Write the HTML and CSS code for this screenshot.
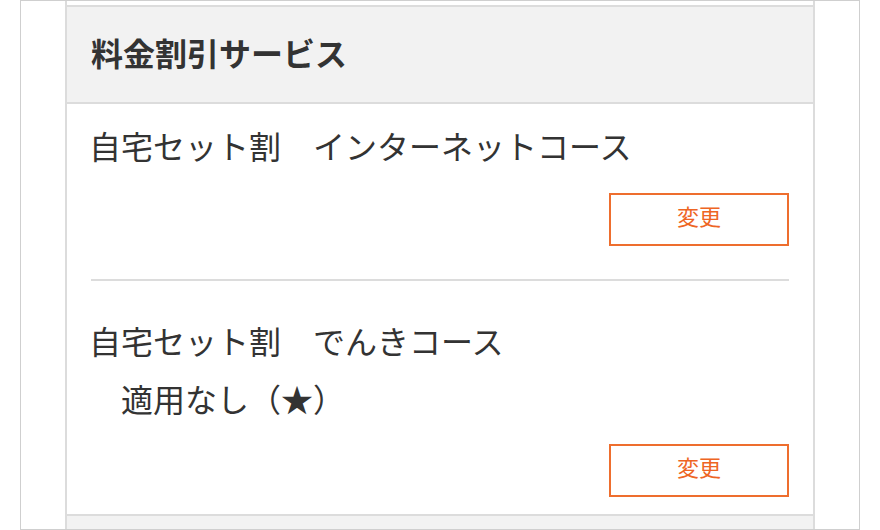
FILE: index.html
```html
<!DOCTYPE html>
<html lang="ja">
<head>
<meta charset="utf-8">
<title>料金割引サービス</title>
<link rel="stylesheet" href="styles.css">
</head>
<body>
<div class="frame">
  <div class="column">
    <section class="panel">
      <h2 class="panel-title">料金割引サービス</h2>
      <div class="item item-first">
        <p class="item-text">自宅セット割　インターネットコース</p>
        <div class="item-actions"><button class="btn-change" type="button">変更</button></div>
      </div>
      <div class="item item-last">
        <p class="item-text">自宅セット割　でんきコース<br>　適用なし（★）</p>
        <div class="item-actions"><button class="btn-change" type="button">変更</button></div>
      </div>
    </section>
    <div class="next-panel"></div>
  </div>
</div>
</body>
</html>
```

FILE: styles.css
```css
* { box-sizing: border-box; }
html, body { margin: 0; padding: 0; background: #fff; }
body {
  font-family: "Noto Sans CJK JP", "Noto Sans", sans-serif;
  color: #333;
}
.frame {
  margin-left: 20px;
  width: 840px;
  height: 530px;
  border: 1px solid #cfcfcf;
  padding-left: 44px;
  overflow: hidden;
}
.column {
  width: 750px;
  height: 100%;
  border-left: 2px solid #dcdcdc;
  border-right: 2px solid #dcdcdc;
  padding-top: 4px;
  display: flex;
  flex-direction: column;
}
.panel {
  border-top: 2px solid #dcdcdc;
  border-bottom: 2px solid #dcdcdc;
}
.panel-title {
  margin: 0;
  height: 97px;
  background: #f2f2f2;
  border-bottom: 2px solid #dcdcdc;
  display: flex;
  align-items: center;
  padding-left: 24px;
  padding-bottom: 6px;
  font-size: 32px;
  font-weight: bold;
  line-height: 1;
  color: #333;
}
.item {
  margin: 0 24px 0 24px;
}
.item-first {
  padding: 12px 0 33px;
  border-bottom: 2px solid #dcdcdc;
}
.item-last {
  padding: 30px 0 17px;
}
.item-text {
  margin: 0 0 0 -2px;
  font-size: 32px;
  line-height: 58px;
  color: #333;
}
.item-actions {
  display: flex;
  justify-content: flex-end;
}
.item-first .item-actions { margin-top: 19px; }
.item-last .item-actions { margin-top: 17px; }
.btn-change {
  width: 180px;
  height: 53px;
  border: 2px solid #ee6e2e;
  background: #fff;
  color: #ee6524;
  font-family: "Noto Sans CJK JP", "Noto Sans", sans-serif;
  font-size: 22px;
  line-height: 1;
  padding: 0 0 9px;
  border-radius: 0;
}
.next-panel {
  flex: 1;
  background: #f2f2f2;
}
```
